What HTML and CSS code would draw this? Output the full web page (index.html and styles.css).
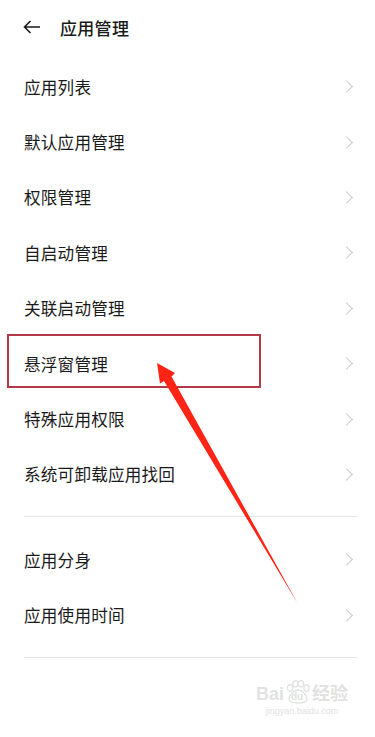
FILE: index.html
```html
<!DOCTYPE html>
<html lang="zh-CN">
<head>
    <meta charset="UTF-8">
    <meta name="viewport" content="width=device-width, initial-scale=1.0">
    <title>应用管理</title>
    <link rel="stylesheet" href="styles.css">
</head>
<body>
    <header class="topbar">
        <svg class="back" width="18" height="14" viewBox="0 0 18 14">
            <path d="M17 7H1.5M7.5 1L1.5 7l6 6" fill="none" stroke="#1a1a1a" stroke-width="1.6"/>
        </svg>
        <h1>应用管理</h1>
    </header>

    <ul class="menu">
        <li>应用列表<span class="chev"></span></li>
        <li>默认应用管理<span class="chev"></span></li>
        <li>权限管理<span class="chev"></span></li>
        <li>自启动管理<span class="chev"></span></li>
        <li>关联启动管理<span class="chev"></span></li>
        <li>悬浮窗管理<span class="chev"></span></li>
        <li>特殊应用权限<span class="chev"></span></li>
        <li>系统可卸载应用找回<span class="chev"></span></li>
    </ul>

    <ul class="menu second">
        <li>应用分身<span class="chev"></span></li>
        <li>应用使用时间<span class="chev"></span></li>
    </ul>

    <!-- annotation drawn on top of the screenshot -->
    <div class="mark-box"></div>
    <svg class="mark-arrow" width="375" height="737" viewBox="0 0 375 737">
        <polygon points="157,363 175,373 171.5,376.5 298,604 164,381 160,383.5" fill="#ff2415"/>
    </svg>

    <div class="watermark">
        <div class="wm-logo">
            <span>Bai</span>
            <span class="paw">
                <svg width="26" height="24" viewBox="0 0 26 24">
                    <g fill="none" stroke="#e2e2e2" stroke-width="1.3">
                        <ellipse cx="5" cy="8" rx="2.6" ry="3.3"/>
                        <ellipse cx="10.5" cy="3.8" rx="2.6" ry="3.2"/>
                        <ellipse cx="16" cy="3.8" rx="2.6" ry="3.2"/>
                        <ellipse cx="21.5" cy="8" rx="2.6" ry="3.3"/>
                        <path d="M13 10c-4 0-9 5-9 9 0 3 4 4 9 4s9-1 9-4c0-4-5-9-9-9z"/>
                    </g>
                </svg>
                <span class="du">du</span>
            </span>
            <span>经验</span>
        </div>
        <div class="wm-url">jingyan.baidu.com</div>
    </div>
</body>
</html>
```

FILE: styles.css
```css
* {
    margin: 0;
    padding: 0;
    box-sizing: border-box;
}

body {
    font-family: "Noto Sans CJK SC", "Noto Sans", sans-serif;
    background: #fff;
    color: #1a1a1a;
    width: 375px;
    height: 737px;
    position: relative;
    overflow: hidden;
}

.topbar {
    height: 59px;
    display: flex;
    align-items: center;
    padding: 0 0 5px 23px;
}

.topbar .back {
    margin-right: 19px;
}

.topbar h1 {
    font-size: 17px;
    font-weight: 500;
    letter-spacing: 0.3px;
}

.menu {
    list-style: none;
    margin: 0 18px 0 24px;
    padding-bottom: 14px;
    border-bottom: 1px solid #e6e6e6;
}

.menu.second {
    padding-top: 15px;
}

.menu li {
    height: 55.4px;
    display: flex;
    align-items: center;
    justify-content: space-between;
    font-size: 16.6px;
    letter-spacing: 0.2px;
}

.chev {
    width: 9px;
    height: 9px;
    border-top: 1.3px solid #c8c8c8;
    border-right: 1.3px solid #c8c8c8;
    transform: rotate(45deg);
    margin-right: 6px;
}

.mark-box {
    position: absolute;
    left: 7px;
    top: 334px;
    width: 254px;
    height: 54px;
    border: 2px solid #b23a48;
}

.mark-arrow {
    position: absolute;
    left: 0;
    top: 0;
}

.watermark {
    position: absolute;
    left: 256px;
    top: 680px;
    color: #e2e2e2;
    text-align: center;
    white-space: nowrap;
}

.wm-logo {
    display: flex;
    align-items: flex-end;
    font-family: "Liberation Sans", "Noto Sans CJK SC", sans-serif;
    font-size: 18px;
    font-weight: bold;
    line-height: 20px;
}

.wm-logo .paw {
    position: relative;
    display: block;
    width: 26px;
    height: 24px;
    margin: 0 1px;
}

.wm-logo .du {
    position: absolute;
    left: 6px;
    top: 11px;
    font-size: 10px;
    line-height: 12px;
}

.wm-url {
    font-family: "Liberation Sans", sans-serif;
    font-size: 9px;
    line-height: 14px;
}
```
